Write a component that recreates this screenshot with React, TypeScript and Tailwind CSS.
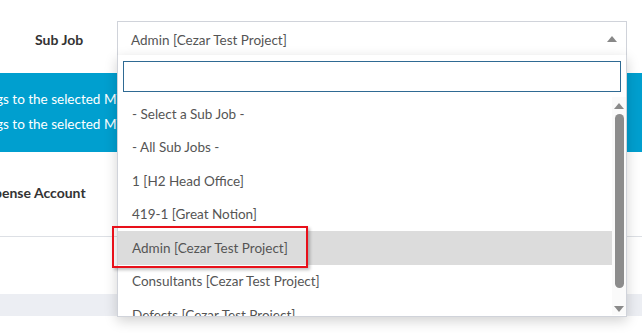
import React from 'react';

const options = [
  '- Select a Sub Job -',
  '- All Sub Jobs -',
  '1 [H2 Head Office]',
  '419-1 [Great Notion]',
  'Admin [Cezar Test Project]',
  'Consultants [Cezar Test Project]',
  'Defects [Cezar Test Project]',
];

const SubJobDropdown: React.FC = () => {
  return (
    <div className="absolute left-[117px] top-[55px] w-[510px] h-[262px] bg-white border border-t-0 border-[#d0d3da] shadow-[0_4px_12px_rgba(0,0,0,0.18)] overflow-hidden">
      <div className="px-[5px] pt-[6px] pb-[5px]">
        <div className="h-[31px] border border-[#2f6a93] bg-white" />
      </div>
      <div className="flex">
        <ul className="flex-1 flex flex-col">
          {options.map((o) => {
            const active = o === 'Admin [Cezar Test Project]';
            return (
              <li
                key={o}
                className={`h-[33.5px] shrink-0 flex items-center pl-[14px] text-[13.5px] text-[#555] whitespace-nowrap ${
                  active ? 'bg-[#dcdcdc]' : ''
                }`}
              >
                {o}
              </li>
            );
          })}
        </ul>
        {/* scrollbar */}
        <div className="w-[14px] h-[218px] bg-[#fafafa] flex flex-col items-center">
          <div className="mt-[6px] w-0 h-0 border-x-[5px] border-x-transparent border-b-[6px] border-b-[#8a8a8a]" />
          <div className="mt-[5px] w-[9px] h-[174px] rounded-full bg-[#8c8c8c]" />
          <div className="mt-auto mb-[3px] w-0 h-0 border-x-[5px] border-x-transparent border-t-[6px] border-t-[#8a8a8a]" />
        </div>
      </div>
    </div>
  );
};

const App: React.FC = () => {
  return (
    <div className="relative w-[642px] h-[333px] bg-white overflow-hidden font-['Lato','Liberation_Sans',sans-serif]">
      {/* Sub Job row */}
      <div className="flex items-center pt-[21px] h-[73px] pb-[17px]">
        <div className="w-[117px] pl-[35px] pt-[2px] text-[14px] font-bold text-[#333]">Sub Job</div>
        <div className="w-[510px] h-[35px] border border-[#d0d3da] flex items-center justify-between pt-[3px] pl-[13px] pr-[9px] text-[13.5px] text-[#555]">
          <span>Admin [Cezar Test Project]</span>
          <span className="-mt-[3px] w-0 h-0 border-x-[5px] border-x-transparent border-b-[6px] border-b-[#888]" />
        </div>
      </div>

      {/* info banner */}
      <div className="h-[79px] bg-[#009fcf] text-white text-[13.5px] leading-[25px] pt-[14px] -ml-[4px] whitespace-nowrap">
        <div>gs to the selected MYOB account</div>
        <div>gs to the selected MYOB account</div>
      </div>

      {/* Expense Account row */}
      <div className="h-[85px] border-b border-[#dde0e5] flex items-start pt-[30px]">
        <div className="-ml-[6px] text-[14px] font-bold text-[#333]">pense Account</div>
      </div>

      <div className="h-[57px]" />
      <div className="h-[22px] bg-[#eceef3]" />

      <SubJobDropdown />

      {/* highlighted item outline */}
      <div className="absolute left-[112px] top-[226px] w-[196px] h-[42px] border-2 border-[#e8101a] shadow-[2px_2px_3px_rgba(0,0,0,0.25)]" />
    </div>
  );
};

export default App;
